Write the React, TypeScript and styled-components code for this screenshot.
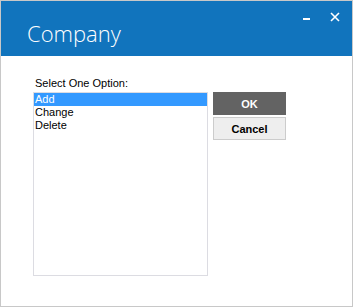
import styled, { createGlobalStyle } from "styled-components";

const GlobalStyle = createGlobalStyle`
  html, body {
    margin: 0;
    padding: 0;
    background: #ffffff;
  }
  body {
    font-family: "Liberation Sans", Arial, sans-serif;
  }
`;

const Window = styled.div`
  width: 353px;
  height: 307px;
  box-sizing: border-box;
  border: 1px solid #c8c8c8;
  background: #ffffff;
  display: flex;
  flex-direction: column;
`;

const TitleBar = styled.div`
  height: 55px;
  background: #1174bd;
  display: flex;
  align-items: flex-start;
  justify-content: space-between;
  padding: 0 11px 0 26px;
`;

const Title = styled.h1`
  margin: 18px 0 0;
  font-family: "Open Sans", "Noto Sans", sans-serif;
  font-weight: 300;
  font-size: 22px;
  line-height: 28px;
  color: #ffffff;
`;

const Controls = styled.div`
  display: flex;
  gap: 16px;
  margin-top: 10px;
`;

const ControlButton = styled.button`
  width: 12px;
  height: 12px;
  padding: 0;
  border: 0;
  background: transparent;
  display: flex;
  align-items: center;
  justify-content: center;
`;

const Body = styled.div`
  display: flex;
  gap: 5px;
  padding: 20px 0 0 32px;
`;

const Field = styled.div`
  display: flex;
  flex-direction: column;
`;

const Label = styled.label`
  font-size: 11px;
  line-height: 14px;
  color: #000000;
  padding-left: 2px;
  margin-bottom: 2px;
`;

const ListBox = styled.ul`
  width: 175px;
  height: 184px;
  box-sizing: border-box;
  margin: 0;
  padding: 0;
  list-style: none;
  border: 1px solid #dcdce2;
`;

const Option = styled.li<{ $selected?: boolean }>`
  font-size: 11px;
  line-height: 13px;
  padding-left: 1px;
  background: ${(p) => (p.$selected ? "#3399ff" : "transparent")};
  color: ${(p) => (p.$selected ? "#ffffff" : "#000000")};
`;

const Buttons = styled.div`
  display: flex;
  flex-direction: column;
  gap: 2px;
  padding-top: 16px;
`;

const Button = styled.button<{ $primary?: boolean }>`
  width: 73px;
  height: 23px;
  box-sizing: border-box;
  padding: 0;
  font-family: "Liberation Sans", Arial, sans-serif;
  font-size: 11px;
  font-weight: bold;
  border: 1px solid ${(p) => (p.$primary ? "#636363" : "#cccccc")};
  background: ${(p) => (p.$primary ? "#636363" : "#eeeeee")};
  color: ${(p) => (p.$primary ? "#ffffff" : "#000000")};
`;

export default function App() {
  return (
    <>
      <GlobalStyle />
      <Window>
        <TitleBar>
          <Title>Company</Title>
          <Controls>
            <ControlButton aria-label="Minimize">
              <svg width="8" height="12" viewBox="0 0 8 12">
                <rect x="0" y="7" width="7" height="2" fill="#ffffff" />
              </svg>
            </ControlButton>
            <ControlButton aria-label="Close">
              <svg width="10" height="10" viewBox="0 0 10 10">
                <path d="M1 1 L9 9 M9 1 L1 9" stroke="#ffffff" strokeWidth="1.6" />
              </svg>
            </ControlButton>
          </Controls>
        </TitleBar>
        <Body>
          <Field>
            <Label>Select One Option:</Label>
            <ListBox>
              <Option $selected>Add</Option>
              <Option>Change</Option>
              <Option>Delete</Option>
            </ListBox>
          </Field>
          <Buttons>
            <Button $primary>OK</Button>
            <Button>Cancel</Button>
          </Buttons>
        </Body>
      </Window>
    </>
  );
}
